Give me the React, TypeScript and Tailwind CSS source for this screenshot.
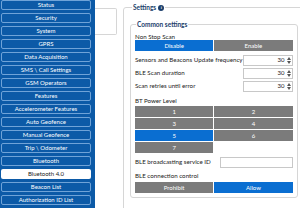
const menu = [
  'Status',
  'Security',
  'System',
  'GPRS',
  'Data Acquisition',
  'SMS \\ Call Settings',
  'GSM Operators',
  'Features',
  'Accelerometer Features',
  'Auto Geofence',
  'Manual Geofence',
  'Trip \\ Odometer',
  'Bluetooth',
  'Bluetooth 4.0',
  'Beacon List',
  'Authorization ID List',
];

function Spin({ value }: { value: string }) {
  return (
    <div className="w-[50px] h-[11px] border border-[#c8c8c8] flex items-center justify-end pr-[1px] bg-white">
      <span className="text-[6px] leading-none text-[#222] mr-[2px]">{value}</span>
      <div className="flex flex-col gap-[1px]">
        <svg width="4" height="3" viewBox="0 0 4 3"><path d="M0 3L2 0L4 3Z" fill="#555" /></svg>
        <svg width="4" height="3" viewBox="0 0 4 3"><path d="M0 0L2 3L4 0Z" fill="#555" /></svg>
      </div>
    </div>
  );
}

function Toggle({ left, right, active }: { left: string; right: string; active: 'left' | 'right' }) {
  return (
    <div className="grid grid-cols-2 gap-[1px] h-[11px]">
      <div className={`${active === 'left' ? 'bg-[#0a6ed1]' : 'bg-[#7b7b7b]'} text-white text-[6px] flex items-center justify-center`}>{left}</div>
      <div className={`${active === 'right' ? 'bg-[#0a6ed1]' : 'bg-[#7b7b7b]'} text-white text-[6px] flex items-center justify-center`}>{right}</div>
    </div>
  );
}

export default function App() {
  return (
    <div className="w-[300px] h-[208px] overflow-hidden flex bg-white whitespace-nowrap" style={{ fontFamily: 'Lato, "Noto Sans", sans-serif' }}>
      <div className="w-[95px] shrink-0 bg-[#0c5aa7] flex flex-col gap-[3px] pl-[1px] pr-[4px]">
        {menu.map((m) => (
          <div
            key={m}
            className={`h-[10px] rounded-[2px] flex items-center justify-center text-[6px] leading-none ${
              m === 'Bluetooth 4.0' ? 'bg-white text-[#222]' : 'border border-[#6fa3d8] text-white'
            }`}
          >
            {m}
          </div>
        ))}
      </div>
      <div className="w-[22px] shrink-0 pt-[8px]">
        <div className="h-[27px] border border-l-0 border-[#d6d6d6] rounded-r-[2px]" />
      </div>
      <fieldset className="ml-[6px] mt-[3px] w-[190px] shrink-0 h-[220px] border border-[#d6d6d6] rounded-[3px] pl-[6px] pr-0">
        <legend className="ml-[2px] px-[1px] flex items-center gap-[2px] text-[6.5px] font-bold text-[#1b3e6b]">
          Settings
          <span className="w-[6px] h-[6px] rounded-full bg-[#1b3e6b] text-white text-[4.5px] font-bold leading-none flex items-center justify-center">i</span>
        </legend>
        <fieldset className="mt-[7px] w-[167px] h-[178px] border border-[#d6d6d6] rounded-[3px] px-[4px]">
          <legend className="ml-[1px] px-[1px] text-[6.5px] font-bold text-[#1b3e6b]">Common settings</legend>
          <div className="text-[6.2px] text-[#222] pt-[2px] h-[10px]">Non Stop Scan</div>
          <Toggle left="Disable" right="Enable" active="left" />
          <div className="flex flex-col gap-[2px] mt-[4px]">
            {['Sensors and Beacons Update frequency', 'BLE Scan duration', 'Scan retries until error'].map((l) => (
              <div key={l} className="flex items-center justify-between h-[11px]">
                <span className="text-[6.2px] text-[#222]">{l}</span>
                <Spin value="30" />
              </div>
            ))}
          </div>
          <div className="text-[6.2px] text-[#222] pt-[4px] h-[14px]">BT Power Level</div>
          <div className="grid grid-cols-2 gap-[1px]">
            {['1', '2', '3', '4', '5', '6', '7'].map((n) => (
              <div key={n} className={`h-[11px] ${n === '5' ? 'bg-[#0a6ed1]' : 'bg-[#7b7b7b]'} text-white text-[6px] flex items-center justify-center`}>{n}</div>
            ))}
          </div>
          <div className="flex items-center justify-between h-[11px] mt-[4px]">
            <span className="text-[6.2px] text-[#222]">BLE broadcasting service ID</span>
            <div className="w-[73px] h-[11px] border border-[#c8c8c8]" />
          </div>
          <div className="text-[6.2px] text-[#222] pt-[3px] h-[14px]">BLE connection control</div>
          <Toggle left="Prohibit" right="Allow" active="right" />
        </fieldset>
      </fieldset>
    </div>
  );
}
